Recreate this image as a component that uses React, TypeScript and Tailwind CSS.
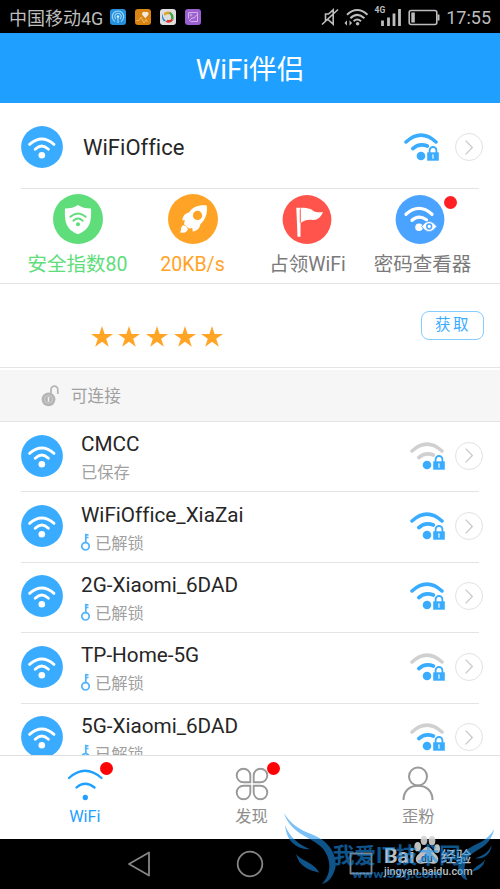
import { Fragment, type ReactNode } from 'react';

type Level = 0 | 1 | 2;

interface Network {
    name: string;
    status: string;
    unlocked: boolean;
    level: Level;
}

const NETWORKS: Network[] = [
    { name: 'CMCC', status: '已保存', unlocked: false, level: 0 },
    { name: 'WiFiOffice_XiaZai', status: '已解锁', unlocked: true, level: 2 },
    { name: '2G-Xiaomi_6DAD', status: '已解锁', unlocked: true, level: 2 },
    { name: 'TP-Home-5G', status: '已解锁', unlocked: true, level: 1 },
    { name: '5G-Xiaomi_6DAD', status: '已解锁', unlocked: true, level: 1 },
];

function WifiBadge() {
    return (
        <svg viewBox="0 0 42 42" className="w-[42px] h-[42px] shrink-0" fill="none">
            <circle cx="21" cy="21" r="20.9" fill="#3aacff" />
            <path d="M8.6 18.4Q20.8 7.6 33 18.4" stroke="#fff" strokeWidth="2.8" strokeLinecap="round" />
            <path d="M14.2 23.3Q20.8 16.9 27.4 23.3" stroke="#fff" strokeWidth="2.8" strokeLinecap="round" />
            <circle cx="20.8" cy="29.2" r="3.3" fill="#fff" />
        </svg>
    );
}

function SignalLock({ level }: { level: Level }) {
    const on = '#3aacff';
    const off = '#d0d0d0';
    return (
        <svg viewBox="0 0 35 28" className="w-[35px] h-[28px] shrink-0" fill="none">
            <path d="M2 9Q17 -4.8 32 9" stroke={level > 1 ? on : off} strokeWidth="3.5" strokeLinecap="round" />
            <path d="M8.8 15.6Q15 9.8 23.4 13" stroke={level > 0 ? on : off} strokeWidth="3.7" strokeLinecap="round" />
            <circle cx="17" cy="23" r="4.3" fill={on} />
            <path d="M25.2 20v-2.8a3.7 3.7 0 0 1 7.4 0V20" fill="#fff" stroke="#fff" strokeWidth="3" />
            <path d="M25.6 20v-2.8a3.4 3.2 0 0 1 6.8 0V20" stroke={on} strokeWidth="1.8" />
            <path d="M23.2 19.3h11.6v8.4H23.2z" fill={on} />
            <path d="M29 21.8v4M28.2 22h1.4" stroke="#fff" strokeWidth="1.1" />
        </svg>
    );
}

function Arrow() {
    return (
        <div className="w-7 h-7 shrink-0 rounded-full border border-[#e2e2e2] flex items-center justify-center">
            <svg viewBox="0 0 8 15" className="w-2 h-[15px]" fill="none">
                <path d="M.6.6 7.4 7.5.6 14.4" stroke="#c8c8c8" strokeWidth="1.3" />
            </svg>
        </div>
    );
}

function StatusBar() {
    return (
        <div className="h-[33px] shrink-0 bg-black flex items-center px-[9px] text-[#bdbdbd]">
            <span className="text-[18px] leading-[33px] whitespace-nowrap pt-[3px]">中国移动4G</span>
            <div className="flex gap-[9px] ml-[7px]">
                <svg viewBox="0 0 16 16" className="w-4 h-4" fill="none">
                    <rect width="16" height="16" rx="3" fill="#2590dd" />
                    <path d="M5 12.5a5.7 5.7 0 1 1 6 0M6 10a3.2 3.2 0 1 1 4 0M8 8v6" stroke="#9fd8fa" strokeWidth="1.1" />
                    <circle cx="8" cy="7.5" r="1.3" fill="#d6effd" />
                </svg>
                <svg viewBox="0 0 16 16" className="w-4 h-4" fill="none">
                    <rect width="16" height="16" rx="3" fill="#d98412" />
                    <path d="M1.5 11.5h2.5l2-3.5 3 6 2-3.5 1.5 2.500" stroke="#eeb766" strokeWidth="1" />
                    <path d="M10.300 9.200 7.200 5.800a2.100 2.100 0 0 1 3.100-2.600 2.100 2.100 0 0 1 3.100 2.600z" fill="#f3e9dc" />
                </svg>
                <svg viewBox="0 0 16 16" className="w-4 h-4" fill="none">
                    <rect width="16" height="16" rx="3" fill="#dedede" />
                    <path d="M3 4.500Q2 8.500 6.500 12.500L3.500 12Q.8 8 3 4.500z" fill="#2b86d0" />
                    <path d="M3.800 4.200Q6.500 1.500 11 3L9 5.500Q6 4.500 4.500 7z" fill="#e0a32c" />
                    <path d="M10 3Q14.500 5 13.500 11L11 9.500Q11.500 6 8.800 4.200z" fill="#3fa640" />
                    <path d="M13 11.500Q10 15 5.500 13L7.500 10.800Q10 11.800 11.700 9.500z" fill="#d43a34" />
                </svg>
                <svg viewBox="0 0 16 16" className="w-4 h-4" fill="none">
                    <rect width="16" height="16" rx="3" fill="#9c5fd0" />
                    <path d="M3.500 9.500v-6h9v9h-7M4 12l3-3h2l3-3.500" stroke="#d3b2ec" strokeWidth="1" />
                    <circle cx="6" cy="6" r="1" stroke="#d3b2ec" strokeWidth=".8" />
                </svg>
            </div>
            <svg viewBox="0 0 120 20" className="w-[120px] h-5 ml-auto overflow-visible" fill="none">
                <path d="M4.500 7v6h3l4.700 4.200V2.800L7.500 7zM1 17.500 17 2.500" stroke="#bdbdbd" strokeWidth="1.600" />
                <path d="M26 7.700Q36.200-1.800 46.500 7.700M29.400 11.200Q36.200 4.500 43.400 11.200M32.600 14.200Q36.200 10.800 40 14.200" stroke="#bdbdbd" strokeWidth="2" />
                <circle cx="36.600" cy="16.800" r="1.800" fill="#bdbdbd" />
                <path d="m23.500 16 2.500-2.800v5.600zM31 16l-2.500-2.800v5.600z" fill="#bdbdbd" />
                <text x="53.500" y="6" fontSize="8.500" fontWeight="700" fill="#bdbdbd">4G</text>
                <path d="M61.500 13.500V19M67.500 10.500V19M73 6.500V19M78.500 2V19" stroke="#bdbdbd" strokeWidth="2.800" />
                <rect x="88.200" y="3.500" width="27.600" height="14" rx="2" stroke="#bdbdbd" strokeWidth="1.600" />
                <path d="M90.300 5.500h3.500v10h-3.500zM116.500 7.500h2v6h-2z" fill="#bdbdbd" />
            </svg>
            <span className="text-[18px] leading-[33px] ml-[5px] pt-0.5">17:55</span>
        </div>
    );
}

function Action({ icon, label, color, dot }: { icon: ReactNode; label: string; color: string; dot?: boolean }) {
    return (
        <div className="w-[115px] flex flex-col items-center pt-[6px]">
            <div className="relative w-[50px] h-[50px]">
                {icon}
                {dot && <span className="absolute -right-[9px] top-[2px] w-[13px] h-[13px] rounded-full bg-[#ff1f25]" />}
            </div>
            <span className={`text-[19.5px] leading-6 mt-[9px] whitespace-nowrap ${color}`}>{label}</span>
        </div>
    );
}

function ShieldIcon() {
    return (
        <svg viewBox="0 0 50 50" className="w-[50px] h-[50px]" fill="none">
            <circle cx="25" cy="25" r="25" fill="#60dd7b" />
            <path d="M25 11c3.500 2.600 7.500 3.300 13 3.400C38.500 27 37.500 35 25 40.300 12.500 35 11.500 27 12 14.400 17.500 14.300 21.500 13.600 25 11z" fill="#fff" />
            <path d="M17.300 22.800Q25 16.200 32.700 22.800M20.300 26.700Q25 22.500 29.700 26.700" stroke="#60dd7b" strokeWidth="1.900" strokeLinecap="round" />
            <circle cx="25" cy="30.300" r="2" fill="#60dd7b" />
        </svg>
    );
}

function RocketIcon() {
    return (
        <svg viewBox="0 0 50 50" className="w-[50px] h-[50px]" fill="none">
            <circle cx="25" cy="25" r="25" fill="#ffa327" />
            <path d="M38.700 11.500c-8.500-.7-13.700 1.500-18 7.300-3.300.2-6.200 3.400-6.400 7.700l2.500-.5-.8 4.300 5 4.200 3.300-.4.400 3.400c4-.6 7.400-3.200 7.600-7.200 5.200-5 7.500-10.600 6.400-18.800z" fill="#fff" />
            <circle cx="29.500" cy="21.400" r="4.600" fill="#ffa327" />
            <path d="M15.400 31.200c2.200.3 4 1.700 4.400 4-.8 3.700-4.300 3.800-8 3.400l1.200-2.200c-.2-2.500.5-4.300 2.400-5.200z" fill="#fff" />
        </svg>
    );
}

function FlagIcon() {
    return (
        <svg viewBox="0 0 50 50" className="w-[50px] h-[50px] overflow-visible" fill="none">
            <circle cx="24" cy="25.500" r="24.400" fill="#ff544b" />
            <path d="M13.300 13.800h4.200v29h-3z" fill="#fff" />
            <path d="M18 13.800c5 0 8 .5 10.500 1.800 2 1.800 4 3.200 11.500 2.500-2.500 6-6.500 8.800-11.500 7.700-4-.5-7.500.6-10.500 3z" fill="#fff" />
            <path d="M17.200 15.500v13" stroke="#ff544b" strokeWidth=".8" />
        </svg>
    );
}

function EyeIcon() {
    return (
        <svg viewBox="0 0 50 50" className="w-[50px] h-[50px] overflow-visible" fill="none">
            <circle cx="22" cy="25.500" r="24.400" fill="#4aa3ff" />
            <path d="M8 20.300Q21 8.500 34 20.300M14 26.300Q20.500 20.300 28.500 25.800" stroke="#fff" strokeWidth="3.200" strokeLinecap="round" />
            <circle cx="21" cy="33.300" r="3.800" fill="#fff" />
            <path d="M23.500 32.500Q31 22 38.800 32.500 31 43 23.500 32.500z" fill="#fff" stroke="#4aa3ff" strokeWidth=".8" />
            <circle cx="31.200" cy="32.500" r="2.400" stroke="#4aa3ff" strokeWidth="1.500" />
        </svg>
    );
}

function Star() {
    return (
        <svg viewBox="0 0 22 21" className="w-[22px] h-[21px]">
            <path d="M11 0l2.600 7.900H22l-6.800 4.900 2.600 7.900L11 15.800l-6.800 4.900 2.600-7.900L0 7.900h8.400z" fill="#ffa424" />
        </svg>
    );
}

function NetworkRow({ net }: { net: Network }) {
    return (
        <div className="h-[70.4px] shrink-0 flex items-center pl-[21px] pr-[17px] pb-[3px]">
            <WifiBadge />
            <div className="ml-[18px] flex-1 pt-[6px]">
                <div className="text-[20.7px] leading-[26px] text-[#262626] whitespace-nowrap">{net.name}</div>
                <div className="flex items-center text-[16.3px] leading-[26px] text-[#a0a0a0] mt-[3px]">
                    {net.unlocked && (
                        <svg viewBox="0 0 9 18" className="w-[9px] h-[18px] mr-[5px] -mt-1" fill="none">
                            <circle cx="4.5" cy="13.300" r="3.700" stroke="#4fb3fd" strokeWidth="1.700" />
                            <path d="M4.800 9.500V.8M4.800 1.800h2.700M4.800 4.500h2.700" stroke="#4fb3fd" strokeWidth="1.700" />
                        </svg>
                    )}
                    {net.status}
                </div>
            </div>
            <SignalLock level={net.level} />
            <div className="ml-[10px]">
                <Arrow />
            </div>
        </div>
    );
}

function Tab({ icon, label, active, dot }: { icon: ReactNode; label: string; active?: boolean; dot?: boolean }) {
    return (
        <div className="flex-1 flex flex-col items-center pt-[10px]">
            <div className="relative w-9 h-9">
                {icon}
                {dot && <span className="absolute -right-[10px] -top-[4px] w-[13px] h-[13px] rounded-full bg-[#ff0005]" />}
            </div>
            <span className={`text-[16.3px] leading-5 mt-[5px] ${active ? 'text-[#1f9fff]' : 'text-[#8e8e8e]'}`}>{label}</span>
        </div>
    );
}

function Watermark() {
    return (
        <svg viewBox="0 0 690 417" className="absolute left-[270px] bottom-0 w-[230px] h-[139px] pointer-events-none">
            <g fill="#d4d4d4" opacity=".9">
                <text x="342" y="339" fontSize="60" fontWeight="700" textLength="92" lengthAdjust="spacingAndGlyphs">Bai</text>
                <ellipse cx="443" cy="290" rx="10" ry="14" />
                <ellipse cx="462" cy="271" rx="10" ry="14" />
                <ellipse cx="486" cy="272" rx="10" ry="14" />
                <ellipse cx="501" cy="296" rx="9" ry="13" />
                <path d="M472 290c12 0 18 18 27 25 12 12 4 28-10 26-12-3-22-3-34 0-15 3-24-13-12-26 10-8 17-25 29-25z" />
                <text x="512" y="337" fontSize="46" fontWeight="500" textLength="92" lengthAdjust="spacingAndGlyphs">经验</text>
                <text x="342" y="374" fontSize="30" fontWeight="500" textLength="266" lengthAdjust="spacingAndGlyphs">jingyan.baidu.com</text>
            </g>
            <text x="453" y="335" fontSize="31" fontWeight="700" fill="#164f7c">du</text>
            <g fill="#1a94f0" opacity=".57">
                <path d="M42 190C62 222 90 240 125 253 175 272 200 310 197 350 190 380 175 398 155 402 178 380 184 350 172 318 160 285 125 272 98 255 68 238 50 215 42 190z" />
                <path d="M45 225C60 265 90 285 120 298 85 298 50 280 45 225zM78 312C95 335 130 335 148 368 115 360 88 350 78 312z" />
                <path d="M672 238C655 268 630 278 605 290 575 305 560 335 566 362 572 378 580 388 592 390 582 370 580 345 592 325 605 305 640 295 655 275 665 262 670 250 672 238zM665 285C655 310 635 318 615 325 640 328 662 315 665 285zM645 328C635 345 618 345 605 365 625 362 642 350 645 328z" />
                <text x="188" y="340" fontSize="64" fontWeight="700" textLength="384" lengthAdjust="spacingAndGlyphs">我爱IT技术网</text>
                <text x="247" y="384" fontSize="34" fontWeight="700" textLength="270" lengthAdjust="spacingAndGlyphs">www.52ij.com</text>
            </g>
        </svg>
    );
}

export default function App() {
    return (
        <div className="relative w-[500px] h-[889px] overflow-hidden flex flex-col bg-white font-[Roboto,'Noto_Sans_CJK_SC',sans-serif] [font-variant-ligatures:none]">
            <StatusBar />
            <header className="h-[70px] shrink-0 bg-[#1f9fff] flex items-center justify-center text-white text-[27.7px] pt-[4px]">
                WiFi伴侣
            </header>

            {/* Connected network */}
            <div className="h-[86px] shrink-0 ml-[21px] mr-[21px] -mb-px border-b border-[#e4e4e4] flex items-center pt-[3px]">
                <WifiBadge />
                <span className="flex-1 ml-5 text-[22px] text-[#262626]">WiFiOffice</span>
                <SignalLock level={2} />
                <div className="ml-[16px] -mr-1">
                    <Arrow />
                </div>
            </div>

            <div className="h-[96px] shrink-0 px-5 flex border-b border-[#e4e4e4]">
                <Action icon={<ShieldIcon />} label="安全指数80" color="text-[#60dd7b]" />
                <Action icon={<RocketIcon />} label="20KB/s" color="text-[#ffa327]" />
                <Action icon={<FlagIcon />} label="占领WiFi" color="text-[#7a7a7a]" />
                <Action icon={<EyeIcon />} label="密码查看器" color="text-[#7a7a7a]" dot />
            </div>

            <div className="h-[84px] shrink-0 flex items-start justify-between pl-[90.5px] pr-[16.5px] border-b border-[#e4e4e4]">
                <div className="flex gap-[5.7px] mt-[42px]">
                    {[0, 1, 2, 3, 4].map((i) => (
                        <Star key={i} />
                    ))}
                </div>
                <button className="mt-[27px] w-[63px] h-[29px] rounded-lg border border-[#85ccff] text-[#3aacff] text-[15.5px] leading-none tracking-[2.5px] pl-[2px] pt-px">
                    获取
                </button>
            </div>

            <div className="h-[52px] shrink-0 mt-[2px] pl-[41px] flex items-center gap-3 bg-[#f6f6f6] border-b border-[#e4e4e4] text-[#a0a0a0] text-[16.6px]">
                <svg viewBox="0 0 18 22" className="w-[18px] h-[22px]" fill="none">
                    <path d="M10 10V4.500a3.400 3.400 0 0 1 6.800 0V9" stroke="#b4b4b4" strokeWidth="1.700" />
                    <circle cx="7.500" cy="14.300" r="6.900" fill="#b4b4b4" />
                    <circle cx="7.500" cy="14.300" r="4" stroke="#cfcfcf" strokeWidth=".9" />
                    <path d="M7.500 11.800v5" stroke="#efefef" strokeWidth="1.500" />
                </svg>
                <span className="pt-[4px]">可连接</span>
            </div>

            <div className="flex-1 min-h-0 overflow-hidden flex flex-col">
                {NETWORKS.map((net, i) => (
                    <Fragment key={net.name}>
                        {i > 0 && <div className="h-px -mt-px shrink-0 mx-[21px] bg-[#e4e4e4]" />}
                        <NetworkRow net={net} />
                    </Fragment>
                ))}
            </div>

            <nav className="h-[84px] shrink-0 flex bg-white border-t border-[#e0e0e0] pl-[1.5px] -mr-[1.5px]">
                <Tab
                    active
                    dot
                    label="WiFi"
                    icon={
                        <svg viewBox="0 0 36 36" className="w-9 h-9" fill="none" stroke="#1f9fff" strokeWidth="2.300" strokeLinecap="round">
                            <path d="M2 12Q18 -2.500 34.500 12M9.500 21.500Q18 14 27.500 21.500" />
                            <circle cx="18.300" cy="31.500" r="1.500" fill="#1f9fff" />
                        </svg>
                    }
                />
                <Tab
                    dot
                    label="发现"
                    icon={
                        <svg viewBox="0 0 36 36" className="w-9 h-9" fill="none" stroke="#999" strokeWidth="1.900">
                            <path d="M16.300 16.300H9.500a6.800 6.800 0 1 1 6.800-6.800zM19.700 16.300V9.500a6.800 6.800 0 1 1 6.800 6.800zM16.300 19.700v6.800a6.800 6.800 0 1 1-6.800-6.800zM19.700 19.700h6.800a6.800 6.800 0 1 1-6.800 6.800z" />
                        </svg>
                    }
                />
                <Tab
                    label="歪粉"
                    icon={
                        <svg viewBox="0 0 36 36" className="w-9 h-9" fill="none" stroke="#999" strokeWidth="2">
                            <circle cx="18" cy="10.500" r="9" />
                            <path d="M3.500 34C3.500 25 9.500 19.700 18 19.700S32.500 25 32.500 34" />
                        </svg>
                    }
                />
            </nav>

            {/* System keys */}
            <div className="h-[50px] shrink-0 bg-black flex items-center justify-center">
                <svg viewBox="0 0 250 30" className="w-[250px] h-[30px]" fill="none" stroke="#858585" strokeWidth="1.800" strokeLinejoin="round">
                    <path d="M4 15 24 3.500v23z" />
                    <circle cx="125" cy="15" r="12.300" />
                    <path d="M225.500 4.500h21v20h-21z" stroke="#858585" />
                </svg>
            </div>

            <Watermark />
        </div>
    );
}
